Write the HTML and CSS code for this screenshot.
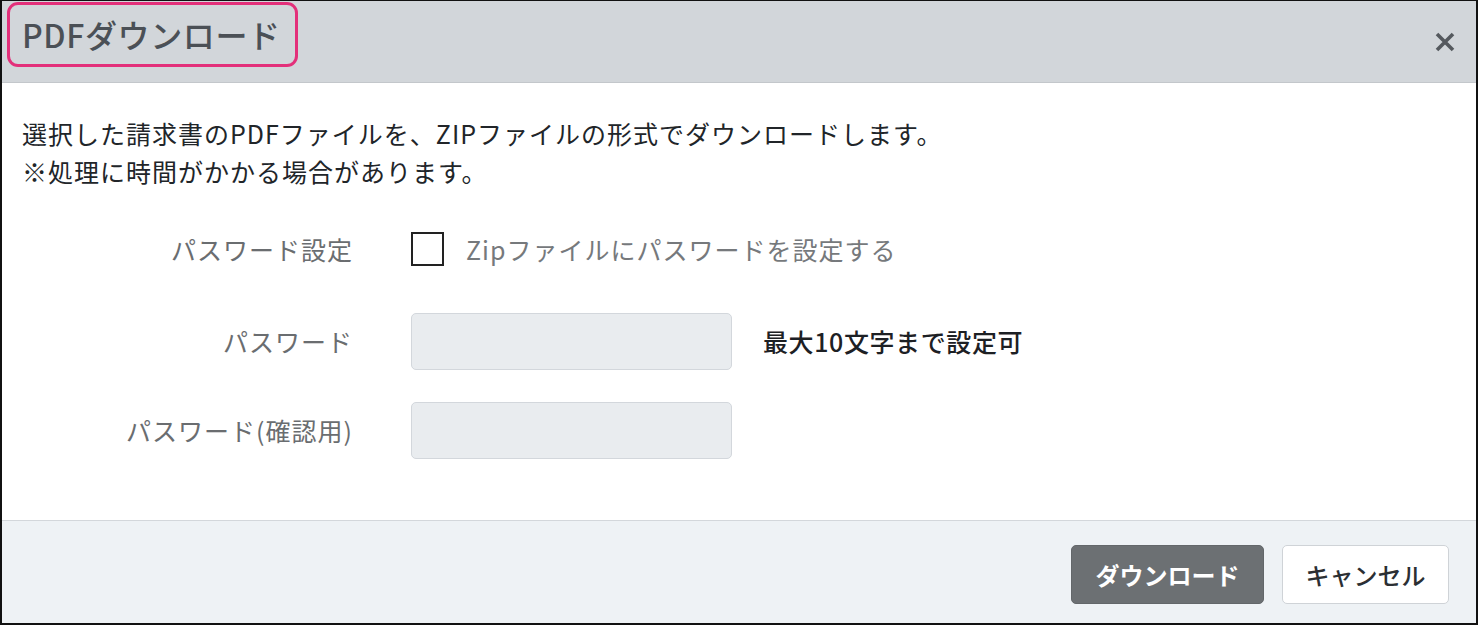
FILE: index.html
```html
<!DOCTYPE html>
<html lang="ja">
<head>
<meta charset="utf-8">
<link rel="stylesheet" href="styles.css">
</head>
<body>
<div class="frame">
  <header class="header">
    <h1 class="title">PDFダウンロード</h1>
    <span class="close" aria-label="close">
      <svg viewBox="0 0 22 22" width="22" height="22"><path d="M3 3 L19 19 M19 3 L3 19" stroke="#55595e" stroke-width="3.6" stroke-linecap="butt"/></svg>
    </span>
  </header>
  <main class="body">
    <p class="desc">選択した請求書のPDFファイルを、ZIPファイルの形式でダウンロードします。<br>※処理に時間がかかる場合があります。</p>
    <div class="form">
      <div class="row row-first">
        <div class="label">パスワード設定</div>
        <label class="check"><span class="box"></span><span class="check-text">Zipファイルにパスワードを設定する</span></label>
      </div>
      <div class="row">
        <div class="label">パスワード</div>
        <div class="input"></div>
        <div class="hint">最大10文字まで設定可</div>
      </div>
      <div class="row">
        <div class="label">パスワード(確認用)</div>
        <div class="input"></div>
      </div>
    </div>
  </main>
  <footer class="footer">
    <button class="btn btn-primary">ダウンロード</button>
    <button class="btn btn-cancel">キャンセル</button>
  </footer>
</div>
</body>
</html>
```

FILE: styles.css
```css
* { box-sizing: border-box; }
html, body { margin: 0; padding: 0; }
body {
  width: 1478px;
  height: 625px;
  font-family: "Noto Sans CJK JP", "Noto Sans", sans-serif;
  background: #fff;
}
.frame {
  width: 1478px;
  height: 625px;
  border: 2px solid #111;
  border-top-width: 1px;
  display: flex;
  flex-direction: column;
  overflow: hidden;
}
.header {
  height: 82px;
  flex: none;
  background: #d2d6da;
  border-bottom: 1px solid #c3c7cb;
  display: flex;
  align-items: center;
  justify-content: space-between;
  padding: 0 20px 0 5px;
}
.title {
  margin: 0;
  font-size: 32px;
  font-weight: 500;
  color: #4b5056;
  line-height: 1;
  border: 3px solid #e3307a;
  border-radius: 11px;
  padding: 13px 14px 14px 12px;
  margin-top: -14px;
  letter-spacing: 0.6px;
}
.close {
  display: flex;
  width: 22px;
  height: 22px;
}
.body {
  height: 437px;
  flex: none;
  padding: 31px 20px 0 20px;
  background: #fff;
}
.desc {
  margin: 0;
  font-size: 25px;
  line-height: 38px;
  color: #212529;
  letter-spacing: 1px;
}
.form {
  margin-top: 31px;
}
.row {
  display: flex;
  align-items: center;
  height: 56px;
  margin-bottom: 33px;
}
.row-first { margin-bottom: 36px; }
.label {
  width: 331px;
  flex: none;
  text-align: right;
  font-size: 25px;
  color: #6a6d70;
  margin-right: 58px;
  letter-spacing: 1px;
}
.check {
  display: flex;
  align-items: center;
}
.box {
  width: 33px;
  height: 34px;
  border: 2px solid #222;
  background: #fff;
  margin-right: 22px;
}
.check-text {
  font-size: 25px;
  color: #76797c;
  letter-spacing: 1px;
}
.input {
  width: 321px;
  height: 57px;
  background: #e9ecef;
  border: 1px solid #d3d7dc;
  border-radius: 5px;
}
.hint {
  margin-left: 31px;
  font-size: 25px;
  color: #1d2024;
  font-weight: 500;
  letter-spacing: 0.6px;
}
.footer {
  flex: 1;
  background: #eef2f5;
  border-top: 1px solid #d3d7db;
  display: flex;
  justify-content: flex-end;
  align-items: flex-start;
  padding: 24px 27px 0 0;
  gap: 18px;
}
.btn {
  font-family: "Noto Sans CJK JP", "Noto Sans", sans-serif;
  font-size: 24px;
  font-weight: 700;
  height: 59px;
  border-radius: 5px;
  padding: 0;
  cursor: pointer;
}
.btn-primary {
  width: 193px;
  background: #6c7073;
  color: #fff;
  border: 1px solid #63676a;
}
.btn-cancel {
  width: 167px;
  background: #fff;
  color: #2b2f33;
  border: 1px solid #cfd3d7;
  font-weight: 500;
}
```
